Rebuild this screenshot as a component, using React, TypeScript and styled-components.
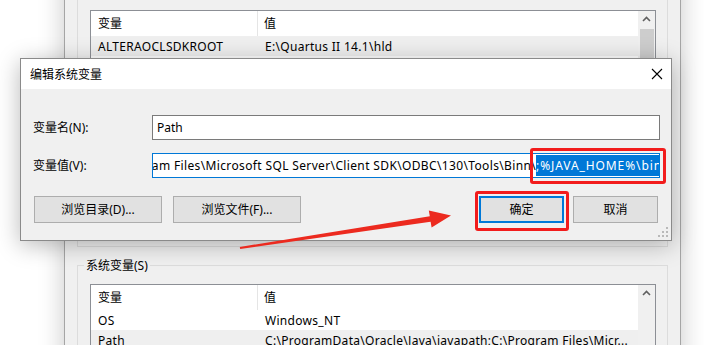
import styled, { createGlobalStyle } from 'styled-components';

const GlobalStyle = createGlobalStyle`
  html, body {
    margin: 0;
    padding: 0;
    background: #ffffff;
    overflow: hidden;
  }
  * {
    box-sizing: border-box;
  }
`;

function App() {
  return (
    <Desktop>
      <GlobalStyle />
      <BackWindow>
        <UserGroup>
          <ListView
            thumb={true}
            header={['变量', '值']}
            rows={[{ name: 'ALTERAOCLSDKROOT', value: 'E:\\Quartus II 14.1\\hld', selected: true }]}
          />
        </UserGroup>
        <SystemGroup>
          <GroupCaption>系统变量(S)</GroupCaption>
          <ListView
            thumb={false}
            header={['变量', '值']}
            rows={[
              { name: 'OS', value: 'Windows_NT', selected: false },
              { name: 'Path', value: 'C:\\ProgramData\\Oracle\\Java\\javapath;C:\\Program Files\\Micr...', selected: true },
            ]}
          />
        </SystemGroup>
      </BackWindow>

      <Dialog>
        <TitleBar>
          <Title>编辑系统变量</Title>
          <CloseIcon width="12" height="12" viewBox="0 0 12 12">
            <path d="M1 1 L11 11 M11 1 L1 11" stroke="#000" strokeWidth="1.1" fill="none" />
          </CloseIcon>
        </TitleBar>
        <DialogBody>
          <FieldRow>
            <FieldLabel>变量名(N):</FieldLabel>
            <TextBox>Path</TextBox>
          </FieldRow>
          <FieldRow>
            <FieldLabel>变量值(V):</FieldLabel>
            <TextBox $focused>
              <Scroller>
                <ValueText>C:\Program Files\Microsoft SQL Server\Client SDK\ODBC\130\Tools\Binn\</ValueText>
                <Selection>;%JAVA_HOME%\bin</Selection>
                <Caret />
              </Scroller>
            </TextBox>
          </FieldRow>
          <ButtonRow>
            <ButtonGroup $gap={11}>
              <Button $w={128}>浏览目录(D)...</Button>
              <Button $w={128}>浏览文件(F)...</Button>
            </ButtonGroup>
            <ButtonGroup $gap={9}>
              <Button $w={85} $primary>确定</Button>
              <Button $w={85}>取消</Button>
            </ButtonGroup>
          </ButtonRow>
        </DialogBody>
        <Grip width="10" height="10" viewBox="0 0 10 10">
          <rect x="8" y="0" width="2" height="2" fill="#b9b9b9" />
          <rect x="4" y="4" width="2" height="2" fill="#b9b9b9" />
          <rect x="8" y="4" width="2" height="2" fill="#b9b9b9" />
          <rect x="0" y="8" width="2" height="2" fill="#b9b9b9" />
          <rect x="4" y="8" width="2" height="2" fill="#b9b9b9" />
          <rect x="8" y="8" width="2" height="2" fill="#b9b9b9" />
        </Grip>
      </Dialog>

      {/* annotations drawn over the screenshot */}
      <RedBox $x={530} $y={148} $w={136} $h={36} />
      <RedBox $x={475} $y={191} $w={94} $h={40} />
      <Arrow width="704" height="345" viewBox="0 0 704 345">
        <polygon
          points="239.8,247 429.8,216.2 428.8,210.6 451,215.6 431.6,227.4 430.6,221.8 240.2,249"
          fill="#ec2a1f"
        />
      </Arrow>
    </Desktop>
  );
}

type Row = { name: string; value: string; selected: boolean };

function ListView({ header, rows, thumb }: { header: string[]; rows: Row[]; thumb: boolean }) {
  return (
    <List>
      <ListContent>
        <HeaderRow>
          <HeadCell $first>{header[0]}</HeadCell>
          <HeadCell>{header[1]}</HeadCell>
        </HeaderRow>
        {rows.map(r => (
          <DataRow key={r.name} $selected={r.selected}>
            <Cell $first>{r.name}</Cell>
            <Cell>{r.value}</Cell>
          </DataRow>
        ))}
      </ListContent>
      <ScrollTrack>
        <ScrollArrow width="17" height="17" viewBox="0 0 17 17">
          <path d="M5 10 L8.5 6.5 L12 10" stroke="#606060" strokeWidth="1.6" fill="none" />
        </ScrollArrow>
        {thumb && <Thumb />}
      </ScrollTrack>
    </List>
  );
}

export default App;

const Desktop = styled.div`
  position: relative;
  width: 704px;
  height: 345px;
  overflow: hidden;
  background: #ffffff;
  font-family: "Segoe UI", "Noto Sans", "Noto Sans CJK SC", sans-serif;
  font-size: 12px;
  color: #000;
`;

const BackWindow = styled.div`
  margin-left: 64px;
  margin-top: -40px;
  width: 617px;
  height: 420px;
  background: #f0f0f0;
  border: 1px solid #a5a5a5;
  box-shadow: 0 0 24px rgba(0, 0, 0, 0.22);
  padding: 14px 12px 0 12px;
  display: flex;
  flex-direction: column;
`;

const UserGroup = styled.div`
  flex: none;
  height: 272px;
  border: 1px solid #dcdcdc;
  padding: 34px 11px 0 12px;
`;

const SystemGroup = styled.fieldset`
  flex: none;
  margin: 10px 0 0;
  border: 1px solid #dcdcdc;
  padding: 0 11px 0 12px;
  min-width: 0;
`;

const GroupCaption = styled.legend`
  padding: 0 2px;
  margin-left: -6px;
  line-height: 17px;
  font-size: 12px;
`;

const List = styled.div`
  display: flex;
  height: 180px;
  background: #fff;
  border: 1px solid #8c8f95;
  margin-top: 0;

  fieldset & {
    margin-top: 10px;
  }
`;

const ListContent = styled.div`
  flex: 1;
  display: flex;
  flex-direction: column;
`;

const HeaderRow = styled.div`
  display: flex;
  height: 25px;
  align-items: center;
  background: #fff;
`;

const HeadCell = styled.div<{ $first?: boolean }>`
  height: 100%;
  display: flex;
  align-items: center;
  width: ${p => (p.$first ? '167px' : 'auto')};
  flex: ${p => (p.$first ? 'none' : '1')};
  padding-left: ${p => (p.$first ? '7px' : '6px')};
  border-right: ${p => (p.$first ? '1px solid #e5e5e5' : 'none')};
  line-height: 17px;
`;

const DataRow = styled.div<{ $selected: boolean }>`
  display: flex;
  height: 20px;
  align-items: center;
  background: ${p => (p.$selected ? '#efefef' : '#fff')};
`;

const Cell = styled.div<{ $first?: boolean }>`
  width: ${p => (p.$first ? '167px' : 'auto')};
  flex: ${p => (p.$first ? 'none' : '1')};
  padding-left: 7px;
  white-space: nowrap;
  overflow: hidden;
  line-height: 17px;
  letter-spacing: 0.3px;
`;

const ScrollTrack = styled.div`
  width: 17px;
  background: #f0f0f0;
  display: flex;
  flex-direction: column;
`;

const ScrollArrow = styled.svg`
  display: block;
  flex: none;
`;

const Thumb = styled.div`
  margin: 1px 1px 0 2px;
  flex: 1;
  background: #cdcdcd;
`;

const Dialog = styled.div`
  position: absolute;
  left: 20px;
  top: 58px;
  width: 652px;
  height: 183px;
  background: #f0f0f0;
  border: 1px solid #8a8a8a;
  box-shadow: 0 4px 22px rgba(0, 0, 0, 0.28);
  display: flex;
  flex-direction: column;
`;

const TitleBar = styled.div`
  height: 30px;
  flex: none;
  background: #fff;
  display: flex;
  align-items: center;
  justify-content: space-between;
  padding: 0 8px 0 9px;
`;

const Title = styled.div`
  line-height: 17px;
`;

const CloseIcon = styled.svg`
  display: block;
`;

const DialogBody = styled.div`
  flex: 1;
  padding: 26px 11px 0 12px;
  display: flex;
  flex-direction: column;
  gap: 13px;
`;

const FieldRow = styled.div`
  display: grid;
  grid-template-columns: 119px 1fr;
  align-items: center;
  height: 25px;
`;

const FieldLabel = styled.div`
  line-height: 17px;
`;

const TextBox = styled.div<{ $focused?: boolean }>`
  height: 25px;
  background: #fff;
  border: 1px solid ${p => (p.$focused ? '#0078d7' : '#7a7a7a')};
  padding: 0 4px;
  display: flex;
  align-items: center;
  overflow: hidden;
  white-space: nowrap;
  line-height: 17px;
`;

const Scroller = styled.div`
  flex: 1;
  display: flex;
  justify-content: flex-end;
  align-items: center;
  margin-right: -5px;
  height: 100%;
  white-space: nowrap;
  min-width: 0;
`;

const ValueText = styled.span`
  flex: none;
  letter-spacing: 0.36px;
`;

const Selection = styled.span`
  flex: none;
  background: #0078d7;
  color: #fff;
  height: 21px;
  display: flex;
  align-items: center;
  letter-spacing: 0.9px;
`;

const Caret = styled.span`
  width: 1px;
  height: 17px;
  background: #d07a2a;
  margin-left: -3px;
  flex: none;
`;

const ButtonRow = styled.div`
  margin-top: 5px;
  display: flex;
  justify-content: space-between;
  padding: 0 2px 0 1px;
`;

const ButtonGroup = styled.div<{ $gap: number }>`
  display: flex;
  gap: ${p => p.$gap}px;
`;

const Button = styled.div<{ $w: number; $primary?: boolean }>`
  width: ${p => p.$w}px;
  height: 27px;
  background: #e1e1e1;
  border: ${p => (p.$primary ? '2px solid #0078d7' : '1px solid #adadad')};
  display: flex;
  align-items: center;
  justify-content: center;
  line-height: 17px;
`;

const Grip = styled.svg`
  position: absolute;
  right: 3px;
  bottom: 3px;
`;

const RedBox = styled.div<{ $x: number; $y: number; $w: number; $h: number }>`
  position: absolute;
  left: ${p => p.$x}px;
  top: ${p => p.$y}px;
  width: ${p => p.$w}px;
  height: ${p => p.$h}px;
  border: 3px solid #f21c1c;
  border-radius: 3px;
`;

const Arrow = styled.svg`
  position: absolute;
  left: 0;
  top: 0;
  pointer-events: none;
`;
